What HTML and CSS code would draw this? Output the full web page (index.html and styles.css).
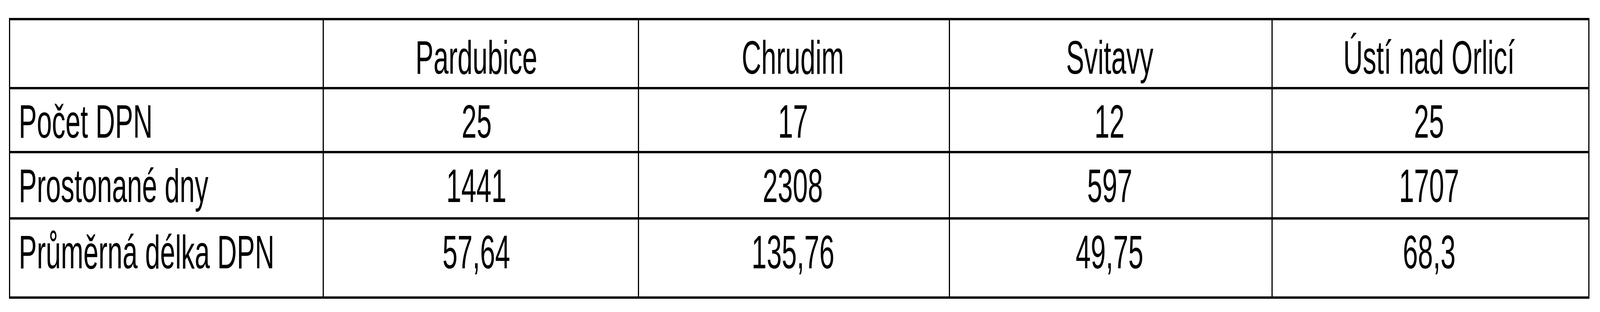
FILE: index.html
```html
<!DOCTYPE html>
<html lang="cs">
<head>
<meta charset="utf-8">
<title>DPN</title>
<link rel="stylesheet" href="styles.css">
<script src="app.js"></script>
</head>
<body>
<div class="grid">
  <div class="cell head label"></div>
  <div class="cell head c2"><span class="t">Pardubice</span></div>
  <div class="cell head c3"><span class="t">Chrudim</span></div>
  <div class="cell head c4"><span class="t">Svitavy</span></div>
  <div class="cell head c5"><span class="t">Ústí nad Orlicí</span></div>

  <div class="cell r1 label"><span class="t">Počet DPN</span></div>
  <div class="cell r1 c2"><span class="t">25</span></div>
  <div class="cell r1 c3"><span class="t">17</span></div>
  <div class="cell r1 c4"><span class="t">12</span></div>
  <div class="cell r1 c5"><span class="t">25</span></div>

  <div class="cell r2 label"><span class="t">Prostonané dny</span></div>
  <div class="cell r2 c2"><span class="t">1441</span></div>
  <div class="cell r2 c3"><span class="t">2308</span></div>
  <div class="cell r2 c4"><span class="t">597</span></div>
  <div class="cell r2 c5"><span class="t">1707</span></div>

  <div class="cell r3 label"><span class="t">Průměrná délka DPN</span></div>
  <div class="cell r3 c2"><span class="t">57,64</span></div>
  <div class="cell r3 c3"><span class="t">135,76</span></div>
  <div class="cell r3 c4"><span class="t">49,75</span></div>
  <div class="cell r3 c5"><span class="t">68,3</span></div>
</div>
</body>
</html>
```
FILE: styles.css
```css
:root {
  /* one reference pixel, horizontally, scaled to the real viewport width */
  --u: calc(100vw / 7154);
  --sx: 0.572547;
}

html, body {
  margin: 0;
  padding: 0;
  background: #fff;
  overflow: hidden;
}

body {
  font-family: "Liberation Sans", Arial, sans-serif;
  color: #000;
}

.grid {
  display: grid;
  grid-template-columns:
    calc(1403 * var(--u))
    calc(1410 * var(--u))
    calc(1390 * var(--u))
    calc(1442 * var(--u))
    calc(1417 * var(--u));
  grid-template-rows: 177px 164px 170px 203px;
  width: max-content;
  margin: 46px 0 0 calc(40 * var(--u));
  border-left: calc(6 * var(--u)) solid #000;
  border-top: 6px solid #000;
}

.cell {
  box-sizing: border-box;
  display: flex;
  justify-content: center;
  align-items: flex-start;
  border-right: calc(6 * var(--u)) solid #000;
  border-bottom: 6px solid #000;
  font-size: 121px;
  line-height: 120px;
  white-space: nowrap;
}

.t {
  display: inline-block;
  flex: none;
  transform: scaleX(var(--sx));
  transform-origin: 50% 50%;
}

.label {
  justify-content: flex-start;
  padding-left: calc(38 * var(--u));
}

.label .t {
  transform-origin: 0 50%;
}

.head { padding-top: 35px; }
.r1 { padding-top: 22px; }
.r2 { padding-top: 23px; }
.r3 { padding-top: 23px; }

.c2 { padding-right: calc(40 * var(--u)); }
.c3 { padding-right: calc(10 * var(--u)); }
.c4 { padding-right: calc(10 * var(--u)); }
.c5 { padding-right: calc(12 * var(--u)); }
```
FILE: app.js
```js
(function () {
  var sx = window.innerWidth / 7154;
  document.documentElement.style.setProperty('--sx', String(sx));
})();
```
